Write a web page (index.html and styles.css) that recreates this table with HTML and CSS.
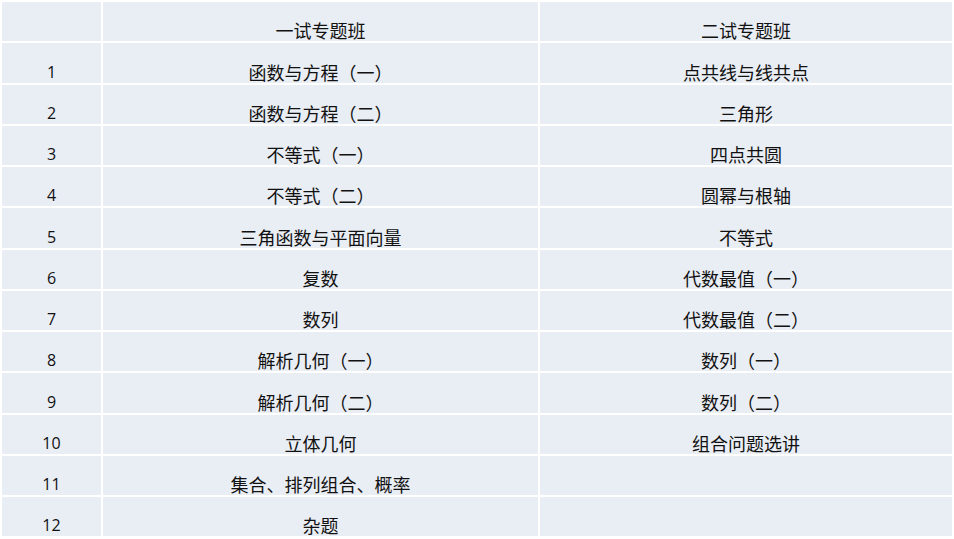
FILE: index.html
```html
<!DOCTYPE html>
<html lang="zh">
<head>
<meta charset="utf-8">
<link rel="stylesheet" href="styles.css">
</head>
<body>
<div class="table">
  <div class="cell num"></div><div class="cell">一试专题班</div><div class="cell">二试专题班</div>
  <div class="cell num">1</div><div class="cell">函数与方程（一）</div><div class="cell">点共线与线共点</div>
  <div class="cell num">2</div><div class="cell">函数与方程（二）</div><div class="cell">三角形</div>
  <div class="cell num">3</div><div class="cell">不等式（一）</div><div class="cell">四点共圆</div>
  <div class="cell num">4</div><div class="cell">不等式（二）</div><div class="cell">圆幂与根轴</div>
  <div class="cell num">5</div><div class="cell">三角函数与平面向量</div><div class="cell">不等式</div>
  <div class="cell num">6</div><div class="cell">复数</div><div class="cell">代数最值（一）</div>
  <div class="cell num">7</div><div class="cell">数列</div><div class="cell">代数最值（二）</div>
  <div class="cell num">8</div><div class="cell">解析几何（一）</div><div class="cell">数列（一）</div>
  <div class="cell num">9</div><div class="cell">解析几何（二）</div><div class="cell">数列（二）</div>
  <div class="cell num">10</div><div class="cell">立体几何</div><div class="cell">组合问题选讲</div>
  <div class="cell num">11</div><div class="cell">集合、排列组合、概率</div><div class="cell"></div>
  <div class="cell num">12</div><div class="cell">杂题</div><div class="cell"></div>
</div>
</body>
</html>
```
FILE: styles.css
```css
html, body {
  margin: 0;
  padding: 0;
  background: #ffffff;
  overflow: hidden;
}
.table {
  display: grid;
  grid-template-columns: 99px 435px 412px;
  grid-auto-rows: 39.25px;
  column-gap: 2px;
  row-gap: 2px;
  padding: 2px;
  width: 952px;
  box-sizing: border-box;
}
.cell {
  background: #e9edf4;
  color: #111111;
  font-family: "Noto Sans CJK SC", "Noto Sans", sans-serif;
  font-size: 18px;
  line-height: 22px;
  text-spacing-trim: space-all;
  font-feature-settings: "chws" 0, "halt" 0, "palt" 0;
  display: flex;
  justify-content: center;
  align-items: flex-end;
  white-space: nowrap;
}
.num {
  font-family: "Open Sans", "Noto Sans", sans-serif;
  font-size: 16px;
  line-height: 16px;
  padding-bottom: 3px;
}
```
